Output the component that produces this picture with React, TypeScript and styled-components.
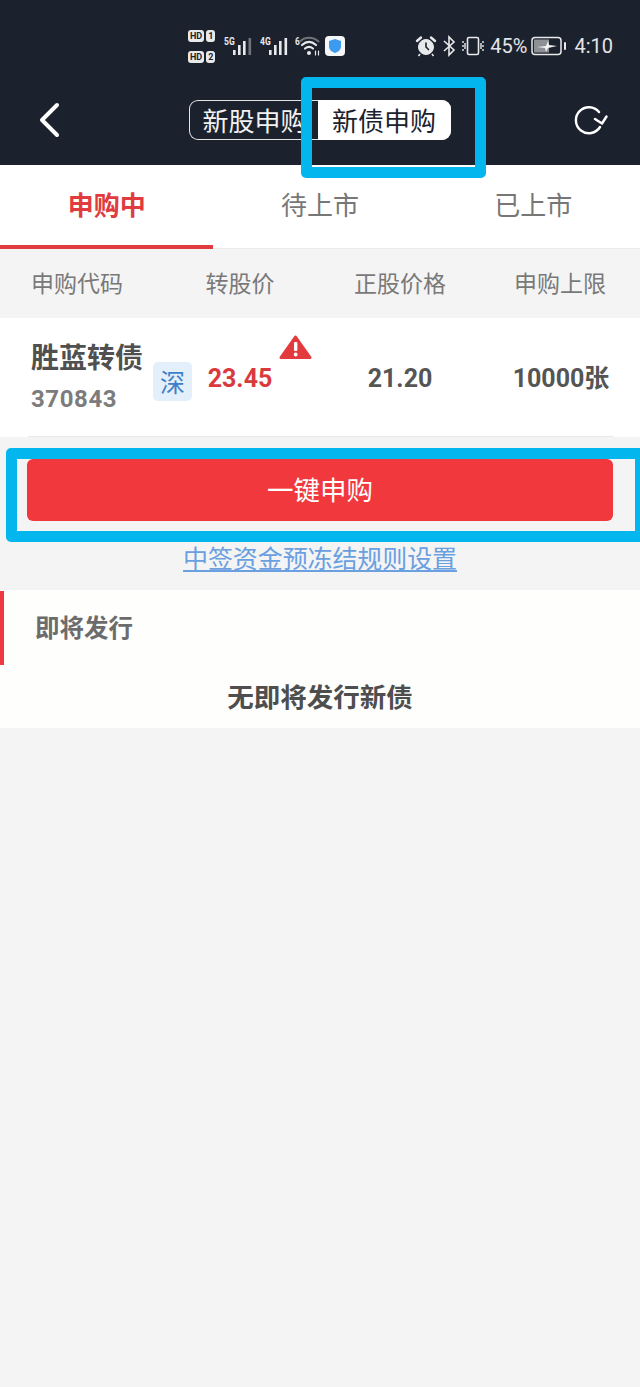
import React from "react";
import styled, { createGlobalStyle } from "styled-components";

const Global = createGlobalStyle`
  html, body { margin: 0; padding: 0; background: #f4f4f5; }
  body { font-family: Roboto, "Noto Sans CJK SC", sans-serif; }
  * { box-sizing: border-box; }
`;

const Page = styled.div`
  position: relative;
  width: 640px;
  height: 1387px;
  overflow: hidden;
  background: #f4f4f5;
`;

const Header = styled.header`
  height: 165px;
  background: #1c222d;
  display: flex;
  flex-direction: column;
`;

const StatusBar = styled.div`
  height: 77px;
  padding: 28px 27px 0 188px;
  display: flex;
  align-items: flex-start;
  justify-content: space-between;
  color: #e8e9eb;
`;

const StatusLeft = styled.div`
  display: flex;
  align-items: center;
  height: 36px;
`;

const StatusRight = styled.div`
  display: flex;
  align-items: center;
  height: 36px;
`;

const SimColumn = styled.div`
  display: flex;
  flex-direction: column;
  gap: 9px;
  width: 30px;
`;

const SimRow = styled.div`
  display: flex;
  gap: 2px;
`;

const SimTag = styled.span`
  height: 12px;
  padding: 0 2px;
  border-radius: 3px;
  background: #e8e9eb;
  color: #1c222d;
  font: 700 9px/12px Roboto, sans-serif;
`;

const Signal = styled.div<{ $gap: number; $width: number }>`
  position: relative;
  width: ${(p) => p.$width}px;
  height: 22px;
  margin-left: ${(p) => p.$gap}px;
`;

const NetLabel = styled.span`
  position: absolute;
  left: 0;
  top: 1px;
  font: 700 10px/11px "Roboto", sans-serif;
  transform: scaleX(0.85);
  transform-origin: left;
  color: #e8e9eb;
`;

const Glyph = styled.svg`
  position: absolute;
  left: 0;
  top: 0;
`;

const Percent = styled.span`
  font: 400 20px/24px Roboto, sans-serif;
  margin-left: 5px;
  color: #e4e5e7;
`;

const Clock = styled(Percent)`
  margin-left: 7px;
`;

const NavBar = styled.div`
  height: 88px;
  padding: 0 32px 2px 38px;
  display: flex;
  align-items: center;
  justify-content: space-between;
`;

const Segment = styled.div`
  display: flex;
  width: 262px;
  height: 40px;
  margin-left: 7px;
  border-radius: 9px;
  overflow: hidden;
  box-shadow: inset 0 0 0 1px #e4e4e6;
`;

const SegmentItem = styled.div<{ $active?: boolean }>`
  font: 400 26px/39px "Noto Sans CJK SC", sans-serif;
  white-space: nowrap;
  overflow: hidden;
  width: ${(p) => (p.$active ? 133 : 129)}px;
  padding-left: ${(p) => (p.$active ? 0 : 14)}px;
  text-align: ${(p) => (p.$active ? "center" : "left")};
  color: ${(p) => (p.$active ? "#1c222d" : "#f2f2f3")};
  background: ${(p) => (p.$active ? "#ffffff" : "transparent")};
`;

const TabBar = styled.nav`
  height: 84px;
  display: grid;
  grid-template-columns: repeat(3, 1fr);
  background: #ffffff;
  border-bottom: 1px solid #ececee;
`;

const Tab = styled.div<{ $active?: boolean }>`
  height: 84px;
  text-align: center;
  font: ${(p) => (p.$active ? 700 : 400)} 26px/78px "Noto Sans CJK SC", sans-serif;
  color: ${(p) => (p.$active ? "#e03c3f" : "#777777")};
  border-bottom: ${(p) => (p.$active ? "4px solid #e03c3f" : "none")};
`;

const TableHead = styled.div`
  height: 69px;
  display: grid;
  grid-template-columns: 154px 172px 148px 166px;
  background: #f4f4f5;
  font: 400 23px/66px "Noto Sans CJK SC", sans-serif;
  color: #797979;
  text-align: center;
`;

const HeadCell = styled.div<{ $shift?: number }>`
  padding-left: ${(p) => p.$shift ?? 0}px;
  white-space: nowrap;
`;

const BondRow = styled.div`
  position: relative;
  height: 119px;
  padding-top: 3px;
  background: #ffffff;
  display: grid;
  grid-template-columns: 154px 172px 148px 166px;
  align-items: center;
`;

const RowRule = styled.div`
  position: absolute;
  left: 28px;
  right: 26px;
  bottom: 0;
  height: 1px;
  background: #e9e9eb;
`;

const NameCell = styled.div`
  padding-left: 31px;
  display: flex;
  flex-direction: column;
  gap: 10px;
  margin-top: -8px;
`;

const BondName = styled.div`
  font: 700 28px/38px "Noto Sans CJK SC", sans-serif;
  color: #505050;
  white-space: nowrap;
`;

const BondCode = styled.div`
  font: 700 24px/28px Roboto, sans-serif;
  letter-spacing: 0.6px;
  color: #7c7c7c;
`;

const MarketTag = styled.span`
  position: absolute;
  left: 153px;
  top: 44px;
  width: 39px;
  height: 39px;
  border-radius: 5px;
  background: #e3effb;
  color: #3d80c9;
  font: 400 25px/39px "Noto Sans CJK SC", sans-serif;
  text-align: center;
`;

const PriceCell = styled.div<{ $red?: boolean; $shift?: number }>`
  font: 700 25px/30px Roboto, "Noto Sans CJK SC", sans-serif;
  text-align: center;
  color: ${(p) => (p.$red ? "#d93a3e" : "#555555")};
  padding-left: ${(p) => p.$shift ?? 0}px;
  white-space: nowrap;
`;

const Warning = styled.svg`
  position: absolute;
  left: 279px;
  top: 17px;
`;

const ActionArea = styled.div`
  padding: 22px 27px 0;
  display: flex;
  flex-direction: column;
  align-items: stretch;
`;

const BuyButton = styled.button`
  height: 62px;
  border: none;
  border-radius: 6px;
  background: #f1383d;
  color: #ffffff;
  font: 400 26.5px/58px "Noto Sans CJK SC", sans-serif;
  padding: 0 0 2px;
`;

const RuleLink = styled.a`
  margin-top: 18px;
  height: 51px;
  text-align: center;
  font: 400 25px/36px "Noto Sans CJK SC", sans-serif;
  letter-spacing: -0.1px;
  color: #6a9fe0;
  text-decoration: underline;
  text-underline-offset: 2px;
  white-space: nowrap;
`;

const Upcoming = styled.section`
  background: #fefefd;
  height: 138px;
  display: flex;
  flex-direction: column;
`;

const UpcomingHead = styled.div`
  height: 75px;
  padding-left: 35px;
  position: relative;
  font: 700 24.5px/73px "Noto Sans CJK SC", sans-serif;
  color: #6c6c6c;
`;

const AccentBar = styled.span`
  position: absolute;
  left: 0;
  top: 1px;
  width: 4px;
  height: 74px;
  background: #ec3a40;
`;

const EmptyText = styled.div`
  height: 63px;
  text-align: center;
  font: 700 26.5px/62px "Noto Sans CJK SC", sans-serif;
  color: #4e4e4e;
`;

const Highlight = styled.div<{ $l: number; $t: number; $w: number; $h: number }>`
  position: absolute;
  left: ${(p) => p.$l}px;
  top: ${(p) => p.$t}px;
  width: ${(p) => p.$w}px;
  height: ${(p) => p.$h}px;
  border: 11px solid #04b6ee;
  border-radius: 5px;
  pointer-events: none;
`;

const SignalBars = ({ dim }: { dim?: boolean }) => (
  <Glyph width="30" height="22" viewBox="0 0 30 22">
    <rect x="9" y="15" width="2.6" height="5" fill="#e8e9eb" />
    <rect x="14" y="10" width="2.6" height="10" fill="#e8e9eb" />
    <rect x="19" y="6" width="2.6" height="14" fill="#e8e9eb" />
    <rect x="24.5" y="3" width="2.6" height="17" fill={dim ? "#6f737a" : "#e8e9eb"} />
  </Glyph>
);

export default function App() {
  return (
    <Page>
      <Global />
      <Header>
        <StatusBar>
          <StatusLeft>
            <SimColumn>
              <SimRow><SimTag>HD</SimTag><SimTag>1</SimTag></SimRow>
              <SimRow><SimTag>HD</SimTag><SimTag>2</SimTag></SimRow>
            </SimColumn>
            <Signal $gap={6} $width={29}>
              <NetLabel>5G</NetLabel>
              <SignalBars dim />
            </Signal>
            <Signal $gap={7} $width={30}>
              <NetLabel>4G</NetLabel>
              <SignalBars />
            </Signal>
            <Signal $gap={5} $width={25}>
              <NetLabel>6</NetLabel>
              <Glyph width="25" height="22" viewBox="0 0 25 22" fill="none" stroke="#e8e9eb" strokeLinecap="round">
                <path d="M5 6.5C10 1.5 18 1.5 23.5 6.5" strokeWidth="2" stroke="#70747b" />
                <path d="M7 10C11.5 6 16.5 6 21 10" strokeWidth="2.2" />
                <path d="M10 13.5C12.5 11.5 15.5 11.5 18 13.5" strokeWidth="2.2" />
                <circle cx="14" cy="18" r="2" fill="#e8e9eb" stroke="none" />
                <path d="M20.5 16v4M23.5 16v4" strokeWidth="1.2" />
              </Glyph>
            </Signal>
            <svg width="20" height="20" viewBox="0 0 20 20" style={{ marginLeft: 5 }}>
              <rect width="20" height="20" rx="4" fill="#f4f6f8" />
              <path d="M10 3l6 2v5c0 4-3 6-6 7-3-1-6-3-6-7V5z" fill="#3b9bf0" />
            </svg>
          </StatusLeft>
          <StatusRight>
            <svg width="22" height="22" viewBox="0 0 22 22" fill="none" stroke="#e8e9eb">
              <circle cx="11" cy="12" r="7.5" fill="#e8e9eb" />
              <path d="M11 7.5V12l3 3" stroke="#1c222d" strokeWidth="1.6" />
              <path d="M2 6l4-3.5M20 6l-4-3.5" strokeWidth="2.4" strokeLinecap="round" />
              <path d="M5 19l-1.5 2M17 19l1.5 2" strokeWidth="1.6" />
            </svg>
            <svg width="14" height="22" viewBox="0 0 14 22" fill="none" stroke="#e8e9eb" strokeWidth="1.6" style={{ marginLeft: 5 }}>
              <path d="M2 6l10 9-5 5V2l5 5L2 16" />
            </svg>
            <svg width="24" height="22" viewBox="0 0 24 22" fill="none" stroke="#e8e9eb" style={{ marginLeft: 5 }}>
              <rect x="6.5" y="2.5" width="11" height="17" rx="1.5" strokeWidth="1.6" />
              <path d="M2 6v2M2 10v2M2 14v2M4 8v6M22 6v2M22 10v2M22 14v2M20 8v6" strokeWidth="1.4" />
            </svg>
            <Percent>45%</Percent>
            <svg width="36" height="20" viewBox="0 0 36 20" fill="none" style={{ marginLeft: 4 }}>
              <rect x="1" y="1.5" width="29" height="17" rx="3" stroke="#e8e9eb" strokeWidth="1.5" />
              <rect x="3" y="3.5" width="15" height="13" fill="#8d9095" />
              <path d="M6 11l9-1 2-5 1 4 8 1-9 2-2 4-1-4z" fill="#f2f2f3" />
              <rect x="33" y="6" width="2" height="8" rx="1" fill="#e8e9eb" />
            </svg>
            <Clock>4:10</Clock>
          </StatusRight>
        </StatusBar>
        <NavBar>
          <svg width="22" height="36" viewBox="0 0 22 36" fill="none" stroke="#ffffff" strokeWidth="4" strokeLinecap="round" strokeLinejoin="round">
            <path d="M19 3L4 18l15 15" />
          </svg>
          <Segment>
            <SegmentItem>新股申购</SegmentItem>
            <SegmentItem $active>新债申购</SegmentItem>
          </Segment>
          <svg width="36" height="30" viewBox="0 0 36 30" fill="none" stroke="#ffffff" strokeWidth="2.4" strokeLinecap="round" strokeLinejoin="round">
            <path d="M28 22a13 13 0 1 1 -1 -15" />
            <path d="M23 14l7 4.5 4.5-7" />
          </svg>
        </NavBar>
      </Header>

      <TabBar>
        <Tab $active>申购中</Tab>
        <Tab>待上市</Tab>
        <Tab>已上市</Tab>
      </TabBar>

      <TableHead>
        <HeadCell>申购代码</HeadCell>
        <HeadCell>转股价</HeadCell>
        <HeadCell>正股价格</HeadCell>
        <HeadCell $shift={6}>申购上限</HeadCell>
      </TableHead>

      <BondRow>
        <NameCell>
          <BondName>胜蓝转债</BondName>
          <BondCode>370843</BondCode>
        </NameCell>
        <PriceCell $red>23.45</PriceCell>
        <PriceCell>21.20</PriceCell>
        <PriceCell $shift={8}>10000张</PriceCell>
        <MarketTag>深</MarketTag>
        <Warning width="33" height="25" viewBox="0 0 33 25">
          <path d="M16.5 2L31 22.5H2z" fill="#e23a3d" stroke="#e23a3d" strokeWidth="3" strokeLinejoin="round" />
          <rect x="15" y="7" width="3.4" height="9" rx="1" fill="#ffffff" />
          <circle cx="16.7" cy="19.5" r="1.9" fill="#ffffff" />
        </Warning>
        <RowRule />
      </BondRow>

      <ActionArea>
        <BuyButton>一键申购</BuyButton>
        <RuleLink>中签资金预冻结规则设置</RuleLink>
      </ActionArea>

      <Upcoming>
        <UpcomingHead>
          <AccentBar />
          即将发行
        </UpcomingHead>
        <EmptyText>无即将发行新债</EmptyText>
      </Upcoming>

      <Highlight $l={301} $t={77} $w={185} $h={101} />
      <Highlight $l={6} $t={448} $w={640} $h={94} />
    </Page>
  );
}
